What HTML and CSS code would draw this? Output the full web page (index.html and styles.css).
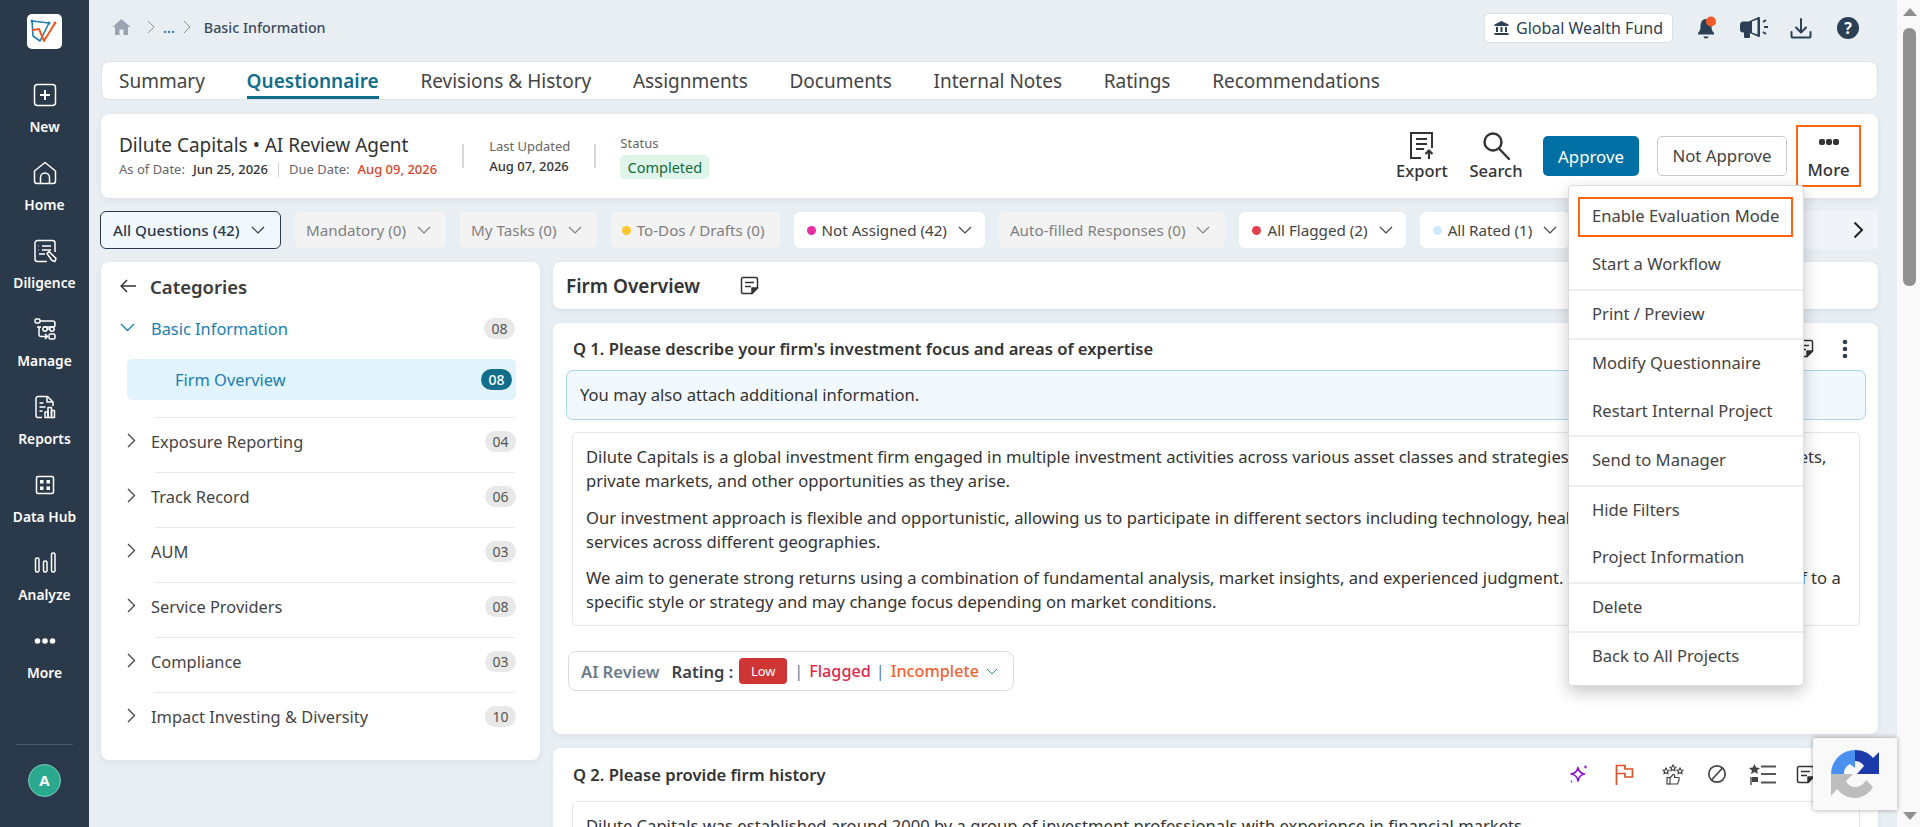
FILE: index.html

```html
<!DOCTYPE html>
<html lang="en">
<head>
<meta charset="utf-8"/>
<meta content="width=device-width, initial-scale=1.0" name="viewport"/>
<title>Basic Information</title>
<link rel="stylesheet" href="styles.css">
</head>
<body>
<div class="app">

  <aside class="sidebar">
    <div class="logo">
      <svg width="35" height="35" viewBox="0 0 35 35" fill="none" stroke-linecap="round" stroke-linejoin="round">
        <path d="M5 7L22 9L13 27L6 22Z" stroke="#1f7fb0" stroke-width="1.6"/>
        <path d="M6 16L12 15L17 27L28 9" stroke="#ef5a24" stroke-width="2"/>
        <circle cx="5" cy="7" r="1.5" fill="#1f7fb0"/>
        <circle cx="22" cy="9" r="1.5" fill="#1f7fb0"/>
        <circle cx="28" cy="9" r="1.5" fill="#ef5a24"/>
      </svg>
    </div>
    <nav class="nav">
      <a class="nav-item">
        <svg width="24" height="24" viewBox="0 0 24 24" fill="none" stroke="#fff" stroke-width="1.5"><rect x="1.5" y="1.5" width="21" height="21" rx="3"/><path d="M12 7v10M7 12h10" stroke-width="2"/></svg>
        <span>New</span>
      </a>
      <a class="nav-item">
        <svg width="24" height="24" viewBox="0 0 24 24" fill="none" stroke="#fff" stroke-width="1.5" stroke-linejoin="round"><path d="M1.5 10L12 1.5L22.5 10V20a2.5 2.5 0 0 1-2.5 2.5H4A2.5 2.5 0 0 1 1.500 20Z"/><path d="M7.500 22V16.500a4.500 4.500 0 0 1 9 0V22"/></svg>
        <span>Home</span>
      </a>
      <a class="nav-item">
        <svg width="24" height="24" viewBox="0 0 24 24" fill="none" stroke="#fff" stroke-width="1.5" stroke-linejoin="round"><path d="M22 13V4a2.500 2.500 0 0 0-2.500-2.500h-15A2.500 2.500 0 0 0 2 4v16a2.500 2.500 0 0 0 2.500 2.500H14"/><path d="M9 7h9M9 11h9M6 15h6M5.500 7h.5M5.500 11h.5"/><path d="M14 14.500l2-2 7 7-1 3-3-1Z"/></svg>
        <span>Diligence</span>
      </a>
      <a class="nav-item">
        <svg width="24" height="24" viewBox="0 0 24 24" fill="none" stroke="#fff" stroke-width="1.5"><rect x="2" y="2" width="5" height="4" rx="1.500"/><path d="M7 4h13a2.500 2.500 0 0 1 2 2.500V8a2 2 0 0 1-2 2h-9"/><circle cx="12" cy="12" r="2.200"/><circle cx="19" cy="12" r="2.200"/><path d="M4 10h4a2 2 0 0 0-2 2v5.500a2 2 0 0 0 2 2h6M12 17l2.500 2.500L12 22M14 12h3"/><rect x="16" y="17" width="6" height="5" rx="1.500"/></svg>
        <span>Manage</span>
      </a>
      <a class="nav-item">
        <svg width="24" height="24" viewBox="0 0 24 24" fill="none" stroke="#fff" stroke-width="1.500" stroke-linejoin="round"><path d="M9 22.500H5a2 2 0 0 1-2-2v-17a2 2 0 0 1 2-2h9.500L20 7v4"/><path d="M14 1.500V7h6M6.500 8h4M6.500 12h6M6.500 16h3"/><rect x="12" y="17" width="3" height="5.500"/><rect x="15" y="12.500" width="3.500" height="10"/><rect x="18.500" y="15.500" width="3" height="7"/></svg>
        <span>Reports</span>
      </a>
      <a class="nav-item">
        <svg width="24" height="24" viewBox="0 0 24 24" fill="none" stroke="#fff" stroke-width="1.500"><rect x="3.500" y="3.500" width="17" height="17" rx="1.500"/><rect x="7" y="7" width="3.500" height="3.500" fill="#fff" stroke="none"/><rect x="13.500" y="7" width="3.500" height="3.500" fill="#fff" stroke="none"/><rect x="7" y="13.500" width="3.500" height="3.500" fill="#fff" stroke="none"/><rect x="13.500" y="13.500" width="3.500" height="3.500" fill="#fff" stroke="none"/></svg>
        <span>Data Hub</span>
      </a>
      <a class="nav-item">
        <svg width="24" height="24" viewBox="0 0 24 24" fill="none" stroke="#fff" stroke-width="1.500"><rect x="2.500" y="7" width="3.500" height="14" rx="1.500"/><rect x="10.500" y="10" width="3.500" height="11" rx="1.500"/><rect x="18.500" y="2" width="3.500" height="19" rx="1.500"/></svg>
        <span>Analyze</span>
      </a>
      <a class="nav-item">
        <svg width="24" height="24" viewBox="0 0 24 24" fill="#fff"><circle cx="4.500" cy="12" r="2.800"/><circle cx="12" cy="12" r="2.800"/><circle cx="19.500" cy="12" r="2.800"/></svg>
        <span>More</span>
      </a>
    </nav>
    <div class="avatar-wrap"><div class="avatar">A</div></div>
  </aside>

  <main class="main">
    <header class="topbar">
      <div class="crumbs">
        <svg class="crumb-home" width="19" height="18" viewBox="0 0 19 18" fill="#9aa5b1"><path d="M9.500 1L0.500 9H3v8h4.500v-5.500h4V17H16V9h2.500Z"/></svg>
        <svg class="crumb-sep" width="8" height="14" viewBox="0 0 8 14" fill="none" stroke="#8a96a3"><path d="M1 1l6 6-6 6"/></svg>
        <span class="crumb-dots">...</span>
        <svg class="crumb-sep" width="8" height="14" viewBox="0 0 8 14" fill="none" stroke="#8a96a3"><path d="M1 1l6 6-6 6"/></svg>
        <span class="crumb-now">Basic Information</span>
      </div>
      <div class="top-right">
        <div class="fund">
          <svg width="15" height="14" viewBox="0 0 15 14" fill="#2b3f55"><path d="M7.500 0L0.500 3.500V5h14V3.500ZM2 6h2v5H2ZM6.500 6h2v5h-2ZM11 6h2v5h-2ZM0.500 12h14v2H0.500Z"/></svg>
          Global Wealth Fund
        </div>
        <svg class="top-bell" width="20" height="24" viewBox="0 0 20 24"><path d="M9 3C4.500 3 3.500 7 3.500 11c0 3-1 4.500-2.500 6v1.500h16V17c-1.500-1.500-2.500-3-2.500-6 0-4-1-8-5.500-8Z" fill="#2b3f55"/><path d="M6.500 20.500h5a2.500 2 0 0 1-5 0Z" fill="#2b3f55"/><circle cx="14" cy="5.500" r="5" fill="#f4592a"/></svg>
        <svg class="top-mega" width="30" height="24" viewBox="0 0 30 24" fill="none" stroke="#2b3f55" stroke-width="2" stroke-linejoin="round"><path d="M1 8.500a2 2 0 0 1 2-2h6L19 2v18L9 15.500H3a2 2 0 0 1-2-2Z" fill="#2b3f55"/><path d="M12 5.500v11l5.500 2V3.500Z" fill="#e9eef3" stroke="none"/><path d="M5 16v5h4v-5" fill="#2b3f55"/><path d="M23 6l3-2M24 11h4M23 16l3 2"/></svg>
        <svg class="top-down" width="22" height="24" viewBox="0 0 22 24" fill="none" stroke="#2b3f55" stroke-width="2" stroke-linecap="round" stroke-linejoin="round"><path d="M11 3v13M6 11.500l5 5 5-5M1.500 16v4.500a1 1 0 0 0 1 1h17a1 1 0 0 0 1-1V16"/></svg>
        <div class="top-help">?</div>
      </div>
    </header>

    <div class="tabs">
      <a class="tab">Summary</a>
      <a class="tab active">Questionnaire</a>
      <a class="tab">Revisions &amp; History</a>
      <a class="tab">Assignments</a>
      <a class="tab">Documents</a>
      <a class="tab">Internal Notes</a>
      <a class="tab">Ratings</a>
      <a class="tab">Recommendations</a>
    </div>

    <section class="head-card">
      <div class="head-title">
        <div class="head-name">Dilute Capitals • AI Review Agent</div>
        <div class="head-dates">
          <span class="muted">As of Date:</span><b>Jun 25, 2026</b><i class="date-sep"></i>
          <span class="muted">Due Date:</span><b class="late">Aug 09, 2026</b>
        </div>
      </div>
      <div class="head-col updated">
        <span class="muted">Last Updated</span>
        <b>Aug 07, 2026</b>
      </div>
      <div class="head-col status">
        <span class="muted">Status</span>
        <span class="badge-done">Completed</span>
      </div>
      <div class="head-actions">
        <a class="act export">
          <svg width="26" height="30" viewBox="0 0 26 30" fill="none" stroke="#333" stroke-width="2"><path d="M12 27H2V2h21v15"/><path d="M7 8h11M7 13h11M7 18h8" /><path d="M20 28v-8M16.500 23l3.500-3.500 3.500 3.500" stroke-width="2.200"/></svg>
          <span>Export</span>
        </a>
        <a class="act search">
          <svg width="28" height="30" viewBox="0 0 28 30" fill="none" stroke="#333" stroke-width="2.400"><circle cx="11" cy="11" r="8.500"/><path d="M17 17.500L27 28" stroke-linecap="round"/></svg>
          <span>Search</span>
        </a>
        <button class="btn-approve">Approve</button>
        <button class="btn-not">Not Approve</button>
        <a class="act more">
          <svg width="22" height="10" viewBox="0 0 22 10" fill="#333"><rect x="1" y="2" width="6" height="6" rx="2"/><rect x="8" y="2" width="6" height="6" rx="2"/><rect x="15" y="2" width="6" height="6" rx="2"/></svg>
          <span>More</span>
        </a>
      </div>
    </section>

    <div class="filters">
      <div class="chip selected">All Questions (42)<svg class="chev" width="14" height="8" viewBox="0 0 14 8"><path d="M1 1l6 6 6-6"/></svg></div>
      <div class="chip off">Mandatory (0)<svg class="chev" width="14" height="8" viewBox="0 0 14 8"><path d="M1 1l6 6 6-6"/></svg></div>
      <div class="chip off">My Tasks (0)<svg class="chev" width="14" height="8" viewBox="0 0 14 8"><path d="M1 1l6 6 6-6"/></svg></div>
      <div class="chip off plain"><i class="dot yellow"></i>To-Dos / Drafts (0)</div>
      <div class="chip on"><i class="dot pink"></i>Not Assigned (42)<svg class="chev" width="14" height="8" viewBox="0 0 14 8"><path d="M1 1l6 6 6-6"/></svg></div>
      <div class="chip off">Auto-filled Responses (0)<svg class="chev" width="14" height="8" viewBox="0 0 14 8"><path d="M1 1l6 6 6-6"/></svg></div>
      <div class="chip on"><i class="dot red"></i>All Flagged (2)<svg class="chev" width="14" height="8" viewBox="0 0 14 8"><path d="M1 1l6 6 6-6"/></svg></div>
      <div class="chip on"><i class="dot sky"></i>All Rated (1)<svg class="chev" width="14" height="8" viewBox="0 0 14 8"><path d="M1 1l6 6 6-6"/></svg></div>
      <div class="filters-rest">
        <svg width="11" height="18" viewBox="0 0 11 18" fill="none" stroke="#222" stroke-width="2"><path d="M1.500 1.500L9 9l-7.500 7.500"/></svg>
      </div>
    </div>

    <div class="columns">
      <aside class="cats">
        <div class="cats-head">
          <svg width="17" height="14" viewBox="0 0 17 14" fill="none" stroke="#333" stroke-width="1.500"><path d="M16 7H1.500M7 1L1.200 7 7 13"/></svg>
          <span>Categories</span>
        </div>
        <div class="cat open">
          <svg class="cat-arrow" width="15" height="9" viewBox="0 0 15 9"><path d="M1 1l6.500 6.500L14 1"/></svg>
          <span class="cat-name">Basic Information</span><span class="count">08</span>
        </div>
        <div class="sub-cat"><span>Firm Overview</span><span class="count dark">08</span></div>
        <div class="cat line">
          <svg class="cat-arrow" width="9" height="15" viewBox="0 0 9 15"><path d="M1 1l6.500 6.500L1 14"/></svg>
          <span class="cat-name">Exposure Reporting</span><span class="count">04</span>
        </div>
        <div class="cat line">
          <svg class="cat-arrow" width="9" height="15" viewBox="0 0 9 15"><path d="M1 1l6.500 6.500L1 14"/></svg>
          <span class="cat-name">Track Record</span><span class="count">06</span>
        </div>
        <div class="cat line">
          <svg class="cat-arrow" width="9" height="15" viewBox="0 0 9 15"><path d="M1 1l6.500 6.500L1 14"/></svg>
          <span class="cat-name">AUM</span><span class="count">03</span>
        </div>
        <div class="cat line">
          <svg class="cat-arrow" width="9" height="15" viewBox="0 0 9 15"><path d="M1 1l6.500 6.500L1 14"/></svg>
          <span class="cat-name">Service Providers</span><span class="count">08</span>
        </div>
        <div class="cat line">
          <svg class="cat-arrow" width="9" height="15" viewBox="0 0 9 15"><path d="M1 1l6.500 6.500L1 14"/></svg>
          <span class="cat-name">Compliance</span><span class="count">03</span>
        </div>
        <div class="cat line">
          <svg class="cat-arrow" width="9" height="15" viewBox="0 0 9 15"><path d="M1 1l6.500 6.500L1 14"/></svg>
          <span class="cat-name">Impact Investing &amp; Diversity</span><span class="count">10</span>
        </div>
      </aside>

      <div class="content">
        <div class="section-head">
          <h2>Firm Overview</h2>
          <svg width="19" height="19" viewBox="0 0 19 19" fill="none" stroke="#333" stroke-width="1.500" stroke-linejoin="round"><path d="M17.500 12V3a1.500 1.500 0 0 0-1.500-1.500H3A1.500 1.500 0 0 0 1.500 3v13A1.500 1.500 0 0 0 3 17.500h9Z"/><path d="M5 6.500h9M5 10.500h6"/><path d="M12 17.500V12h5.500Z" fill="#333"/></svg>
        </div>

        <article class="q-card q-one">
          <div class="q-head">
            <h3>Q 1. Please describe your firm's investment focus and areas of expertise</h3>
            <div class="q-tools">
              <svg class="tool-note" width="19" height="19" viewBox="0 0 19 19" fill="none" stroke="#333" stroke-width="1.500" stroke-linejoin="round"><path d="M17.500 12V3a1.500 1.500 0 0 0-1.500-1.500H3A1.500 1.500 0 0 0 1.500 3v13A1.500 1.500 0 0 0 3 17.500h9Z"/><path d="M5 6.500h9M5 10.500h6"/><path d="M12 17.500V12h5.500Z" fill="#333"/></svg>
              <svg class="tool-dots" width="6" height="20" viewBox="0 0 6 20" fill="#2b3f55"><circle cx="3" cy="3" r="2.300"/><circle cx="3" cy="10" r="2.300"/><circle cx="3" cy="17" r="2.300"/></svg>
            </div>
          </div>
          <div class="q-info">You may also attach additional information.</div>
          <div class="q-answer">
            <p>Dilute Capitals is a global investment firm engaged in multiple investment activities across various asset classes and strategies, including public equity markets, private markets, and other opportunities as they arise.</p>
            <p>Our investment approach is flexible and opportunistic, allowing us to participate in different sectors including technology, healthcare, energy, and financial services across different geographies.</p>
            <p>We aim to generate strong returns using a combination of fundamental analysis, market insights, and experienced judgment. The firm does not restrict itself to a specific style or strategy and may change focus depending on market conditions.</p>
          </div>
          <div class="review">
            <span class="r-agent">AI Review</span>
            <span class="r-rating">Rating :</span>
            <span class="r-low">Low</span>
            <span class="r-sep">|</span>
            <span class="r-flag">Flagged</span>
            <span class="r-sep">|</span>
            <span class="r-inc">Incomplete</span>
            <svg width="12" height="7" viewBox="0 0 12 7" fill="none" stroke="#1f8fb0"><path d="M1 1l5 5 5-5"/></svg>
          </div>
        </article>

        <article class="q-card q-two">
          <div class="q-head">
            <h3>Q 2. Please provide firm history</h3>
            <div class="q-tools wide">
              <svg width="20" height="20" viewBox="0 0 20 20" fill="none" stroke="#8a12d8" stroke-width="1.600" stroke-linejoin="round"><path d="M9 3.500c.8 4 2.500 5.800 6.500 6.500-4 .8-5.700 2.500-6.500 7-.8-4.500-2.500-6.200-7-7 4.500-.7 6.200-2.500 7-6.500Z"/><path d="M16.500 1.500v3M15 3h3M2.500 16.500v2" stroke-width="1.200"/></svg>
              <svg width="19" height="21" viewBox="0 0 19 21" fill="none" stroke="#d9532b" stroke-width="1.700"><path d="M1.500 21V1.500h8.500v3.500h7.500v8h-7.500V9.500H1.500"/></svg>
              <svg width="22" height="21" viewBox="0 0 22 21" fill="none" stroke="#444" stroke-width="1.200"><path d="M4 4l1 2 2 .2-1.500 1.500.4 2-1.900-1-1.900 1 .4-2L1 6.200 3 6ZM11 1l1 2 2 .2-1.500 1.500.4 2-1.900-1-1.900 1 .4-2L8 3.200 10 3ZM18 4l1 2 2 .2-1.500 1.500.4 2-1.900-1-1.900 1 .4-2L15 6.200 17 6Z"/><rect x="5" y="13.500" width="3" height="6.500"/><path d="M8 14l3-3.500c1.500-.5 2 1 1.500 3H17v3l-1.500 3.500H8"/></svg>
              <svg width="20" height="20" viewBox="0 0 20 20" fill="none" stroke="#444" stroke-width="1.700"><circle cx="10" cy="10" r="8.200"/><path d="M4.500 16L15.500 4"/></svg>
              <svg width="27" height="21" viewBox="0 0 27 21" fill="none" stroke="#555" stroke-width="2"><path d="M12 2.500h15M12 10h15M12 18.500h15"/><path d="M5.500 0l1.700 3.500 3.800.4-2.900 2.500.9 3.600-3.500-2-3.500 2 .9-3.600L0 3.900l3.800-.4Z" fill="#444" stroke="none"/><path d="M2 13v8" stroke-width="1.500"/><path d="M3 13h6v5H3Z" fill="#444" stroke="none"/></svg>
              <svg width="19" height="19" viewBox="0 0 19 19" fill="none" stroke="#333" stroke-width="1.500" stroke-linejoin="round"><path d="M17.500 12V3a1.500 1.500 0 0 0-1.500-1.500H3A1.500 1.500 0 0 0 1.500 3v13A1.500 1.500 0 0 0 3 17.500h9Z"/><path d="M5 6.500h9M5 10.500h6"/><path d="M12 17.500V12h5.500Z" fill="#333"/></svg>
            </div>
          </div>
          <div class="q-answer">
            <p>Dilute Capitals was established around 2000 by a group of investment professionals with experience in financial markets.</p>
          </div>
        </article>
      </div>
    </div>
  </main>

  <div class="scrollbar">
    <i class="sb-up"></i>
    <i class="sb-thumb"></i>
    <i class="sb-down"></i>
  </div>

  <div class="menu">
    <a class="menu-item boxed">Enable Evaluation Mode</a>
    <a class="menu-item">Start a Workflow</a>
    <hr>
    <a class="menu-item">Print / Preview</a>
    <hr>
    <a class="menu-item">Modify Questionnaire</a>
    <a class="menu-item">Restart Internal Project</a>
    <hr>
    <a class="menu-item">Send to Manager</a>
    <hr>
    <a class="menu-item">Hide Filters</a>
    <a class="menu-item">Project Information</a>
    <hr>
    <a class="menu-item">Delete</a>
    <hr>
    <a class="menu-item">Back to All Projects</a>
  </div>

  <div class="captcha">
    <svg width="48" height="48" viewBox="0 0 48 48">
      <path d="M24 0A24 24 0 0 0 0 24H13A11 11 0 0 1 19 14L24 18V0Z" fill="#4a90f0"/>
      <path d="M24 0C32 0 38 3 42 8L48 2V24H26L33 16C31 13 28 11 24 11Z" fill="#1c3aa9"/>
      <path d="M0 24H22L15 31C17 35 20 37 24 37C29 37 33 34 35 30L42 37C38 44 31 48 24 48C16 48 10 44 6 39L0 46Z" fill="#bdbdbd"/>
    </svg>
  </div>
</div>
</body>
</html>
```

FILE: styles.css

```css
* {
  box-sizing: border-box;
}
html, body {
  margin: 0;
  height: 827px;
  overflow: hidden;
}
body {
  font-family: "Noto Sans", "Open Sans", Arial, sans-serif;
  background: #e9eef3;
  color: #333;
}
h2, h3, p {
  margin: 0;
}
.app {
  display: flex;
  height: 827px;
  position: relative;
  overflow: hidden;
}

/* sidebar */
.sidebar {
  width: 89px;
  flex-shrink: 0;
  background: #2b3a4a;
  display: flex;
  flex-direction: column;
  align-items: center;
  padding-top: 14px;
}
.logo {
  width: 35px;
  height: 35px;
  background: #fff;
  border-radius: 5px;
}
.nav {
  display: flex;
  flex-direction: column;
  margin-top: 34px;
  flex: 1;
}
.nav-item {
  height: 78px;
  display: flex;
  flex-direction: column;
  align-items: center;
  color: #fff;
  font-size: 13.800px;
  font-weight: 600;
}
.nav-item span {
  margin-top: 11px;
  line-height: 18px;
}
.avatar-wrap {
  width: 57px;
  border-top: 1px solid #46566a;
  display: flex;
  justify-content: center;
  padding: 19px 0 30px;
}
.avatar {
  width: 33px;
  height: 33px;
  border-radius: 50%;
  background: #2ba98f;
  border: 1px solid #7fd0bf;
  color: #fff;
  font-size: 15px;
  font-weight: 700;
  text-align: center;
  line-height: 31px;
}

/* main column */
.main {
  flex: 1;
  min-width: 0;
  padding: 0 19px 0 12px;
}
.topbar {
  height: 61px;
  display: flex;
  justify-content: space-between;
  padding-bottom: 5px;
  align-items: center;
}
.crumbs {
  display: flex;
  align-items: center;
  padding-left: 11px;
  font-size: 14.300px;
  margin-top: -2px;
}
.crumb-sep {
  margin-left: 16px;
}
.crumb-dots {
  color: #1f7fb0;
  margin-left: 8px;
  margin-right: -8px;
  font-weight: 600;
}
.crumb-now {
  color: #3a4a5c;
  font-weight: 500;
  margin-left: 13px;
}
.top-right {
  display: flex;
  align-items: center;
  padding-right: 19px;
}
.fund {
  width: 189px;
  height: 30px;
  background: #fff;
  border: 1px solid #dde2e8;
  border-radius: 5px;
  display: flex;
  align-items: center;
  justify-content: center;
  gap: 7px;
  color: #2b3f55;
  font-size: 16px;
}
.top-bell {
  margin-left: 24px;
}
.top-mega {
  margin-left: 22.500px;
}
.top-down {
  margin-left: 20.500px;
}
.top-help {
  width: 22px;
  height: 22px;
  margin-left: 25px;
  border-radius: 50%;
  background: #2b3f55;
  color: #fff;
  font-size: 16px;
  font-weight: 700;
  text-align: center;
  line-height: 22px;
}

/* tabs */
.tabs {
  height: 39px;
  background: #fff;
  border: 1px solid #dfe3e8;
  border-radius: 8px;
  display: flex;
  gap: 41.700px;
  padding-left: 17px;
}
.tab {
  font-size: 19px;
  line-height: 38px;
  height: 37px;
  color: #444;
}
.tab.active {
  color: #116e8a;
  font-weight: 600;
  border-bottom: 3px solid #116e8a;
}

/* header card */
.head-card {
  height: 84px;
  margin-top: 14px;
  background: #fff;
  border-radius: 8px;
  box-shadow: 0 2px 6px rgba(40, 60, 80, 0.08);
  display: flex;
  align-items: center;
  padding-left: 18px;
  position: relative;
}
.head-title {
  margin-top: -2px;
}
.head-name {
  font-size: 19px;
  line-height: 24px;
  color: #333;
}
.head-dates {
  font-size: 13px;
  line-height: 18px;
  display: flex;
  align-items: center;
  margin-top: 3px;
}
.head-dates .muted {
  margin-right: 8px;
}
.head-dates b {
  font-weight: 500;
  color: #333;
}
.head-dates b.late {
  color: #d9432a;
}
.date-sep {
  width: 1px;
  height: 15px;
  background: #d9d0cc;
  margin: 2px 10px 0;
}
.muted {
  color: #666;
  font-weight: 400;
}
.head-col {
  display: flex;
  flex-direction: column;
  font-size: 13px;
  border-left: 2px solid #d5d9dd;
  height: 24px;
  justify-content: center;
}
.head-col b {
  font-weight: 500;
}
.updated {
  margin-left: 25px;
  padding-left: 25px;
  gap: 2px;
}
.status {
  margin-left: 24px;
  padding-left: 24px;
}
.status .muted {
  margin-top: -21px;
}
.badge-done {
  width: 89px;
  height: 24px;
  margin-top: 3px;
  border-radius: 5px;
  background: #e0f5ea;
  color: #0f6b3a;
  font-size: 14.500px;
  text-align: center;
  line-height: 24px;
  margin-bottom: -22px;
}
.head-actions {
  margin-left: auto;
  display: flex;
  align-items: center;
  height: 100%;
  padding-right: 17px;
}
.act {
  display: flex;
  flex-direction: column;
  align-items: center;
  font-size: 16.500px;
  font-weight: 500;
  color: #333;
}
.act span {
  line-height: 20px;
}
.export {
  width: 60px;
}
.search {
  width: 60px;
  margin-left: 14px;
}
button {
  font-family: inherit;
  font-size: 16.800px;
  height: 40px;
  padding: 0 0 2px;
  border-radius: 5px;
}
.btn-approve {
  width: 96px;
  margin-left: 17px;
  background: #0070a4;
  color: #fff;
  border: none;
  padding: 0;
}
.btn-not {
  width: 130px;
  margin-left: 18px;
  background: #fff;
  color: #444;
  border: 1px solid #c9c9c9;
}
.more {
  width: 65px;
  height: 62px;
  margin-left: 9px;
  border: 2px solid #ff6510;
  padding-top: 10px;
  font-size: 16.800px;
}
.more span {
  margin-top: 13px;
}

/* filter chips */
.filters {
  height: 38px;
  margin-top: 13px;
  margin-left: -1px;
  display: flex;
  align-items: center;
  gap: 14px;
}
.chip {
  height: 36px;
  border-radius: 6px;
  display: flex;
  align-items: center;
  padding: 0 13px;
  font-size: 15.200px;
  white-space: nowrap;
  flex-shrink: 0;
}
.chev {
  margin-left: 11px;
  fill: none;
  stroke: currentColor;
  stroke-width: 1.200;
}
.chip.selected {
  width: 181px;
  height: 38px;
  padding: 0 12px;
  border: 1px solid #2b3a4a;
  background: #f1f8fe;
  color: #2b3a4a;
  font-weight: 500;
}
.chip.off {
  padding: 0 15px 0 11px;
  background: #f3f3f3;
  color: #808080;
}
.chip.on {
  background: #fff;
  color: #444;
}
.dot {
  width: 9px;
  height: 9px;
  border-radius: 50%;
  margin-right: 6px;
}
.yellow { background: #fcc62d; }
.pink { background: #e52ea0; }
.red { background: #e2404f; }
.sky { background: #cde9fb; }
.filters-rest {
  flex: 1;
  height: 38px;
  margin-left: -14px;
  background: #f0f4f9;
  display: flex;
  align-items: center;
  justify-content: flex-end;
  padding-right: 14px;
}

/* two columns */
.columns {
  display: flex;
  gap: 13px;
  margin-top: 13px;
  align-items: flex-start;
}
.cats {
  width: 439px;
  height: 498px;
  flex-shrink: 0;
  background: #fff;
  border-radius: 8px;
  box-shadow: 0 2px 6px rgba(40, 60, 80, 0.08);
  padding: 0 25px 0 19px;
}
.cats-head {
  height: 50px;
  padding-bottom: 2px;
  display: flex;
  align-items: center;
  gap: 13px;
  font-size: 18.500px;
  font-weight: 600;
  color: #3a3a3a;
}
.cat {
  height: 55px;
  display: flex;
  align-items: center;
  font-size: 16.400px;
  color: #444;
  position: relative;
}
.cat-arrow {
  fill: none;
  stroke: #444;
  stroke-width: 1.300;
  position: absolute;
  left: 4px;
  top: 17px;
}
.cat-name {
  margin-left: 31px;
  flex: 1;
}
.cat.open {
  height: 34px;
  padding-bottom: 2px;
  color: #1a7fb0;
}
.cat.open .cat-arrow {
  stroke: #1a7fb0;
  left: 0;
  top: 11px;
}
.cat.line {
  margin-left: 35px;
  border-top: 1px solid #e9e9e9;
  padding-bottom: 8px;
}
.cat.line .cat-arrow {
  left: -28px;
  top: 15px;
}
.cat.line .cat-name {
  margin-left: -4px;
}
.cat.line .count {
  margin-right: -1px;
}
.count {
  width: 31px;
  height: 21px;
  border-radius: 11px;
  background: #e8e8e8;
  color: #555;
  font-size: 14px;
  text-align: center;
  line-height: 21px;
}
.sub-cat {
  width: 389px;
  height: 41px;
  margin: 13px 0 17px 7px;
  background: #e1f3fc;
  border-radius: 5px;
  display: flex;
  align-items: center;
  justify-content: space-between;
  padding: 0 4px 0 48px;
  font-size: 16.400px;
  color: #1a7fb0;
}
.count.dark {
  background: #116e8a;
  color: #fff;
  font-weight: 500;
}

/* right column */
.content {
  flex: 1;
  min-width: 0;
}
.section-head {
  height: 47px;
  background: #fff;
  border-radius: 8px;
  box-shadow: 0 2px 6px rgba(40, 60, 80, 0.08);
  display: flex;
  align-items: center;
  gap: 40px;
  padding-left: 13px;
}
.section-head h2 {
  font-size: 19px;
  font-weight: 600;
  color: #333;
}
.q-card {
  background: #fff;
  border-radius: 8px;
  box-shadow: 0 2px 6px rgba(40, 60, 80, 0.08);
  margin-top: 14px;
  padding: 0 18px 0 13px;
}
.q-one {
  height: 411px;
}
.q-two {
  height: 200px;
}
.q-head {
  height: 47px;
  display: flex;
  align-items: center;
  justify-content: space-between;
  padding-left: 7px;
  padding-top: 4px;
}
.q-head h3 {
  font-size: 16.600px;
  font-weight: 600;
  color: #333;
}
.q-two .q-head {
  padding-top: 5px;
}
.q-tools {
  display: flex;
  align-items: center;
  gap: 28px;
  padding-right: 12px;
}
.q-tools.wide {
  gap: 0;
  padding-right: 45px;
}
.q-tools.wide svg:nth-child(2) { margin-left: 26.500px; }
.q-tools.wide svg:nth-child(3) { margin-left: 27.500px; }
.q-tools.wide svg:nth-child(4) { margin-left: 23px; }
.q-tools.wide svg:nth-child(5) { margin-left: 22.500px; }
.q-tools.wide svg:nth-child(6) { margin-left: 20px; }
.q-info {
  height: 50px;
  margin-right: -6px;
  background: #f1f8fe;
  border: 1px solid #a9d6e5;
  border-radius: 7px;
  padding-left: 13px;
  font-size: 16.600px;
  line-height: 48px;
}
.q-answer {
  margin: 12px 0 0 6px;
  border: 1px solid #e6e6e6;
  border-radius: 5px;
  padding: 12px 12px 0 13px;
  height: 194px;
  font-size: 16.600px;
  line-height: 24px;
}
.q-two .q-answer {
  margin-top: 6px;
}
.q-answer p {
  margin-bottom: 12.500px;
}
.review {
  width: 446px;
  height: 40px;
  margin: 25px 0 0 2px;
  border: 1px solid #dcdce2;
  border-radius: 8px;
  display: flex;
  align-items: center;
  padding-left: 12px;
  font-size: 16.200px;
  font-weight: 500;
  white-space: nowrap;
}
.r-agent { color: #6b7a8d; font-size: 16.600px; font-weight: 600; }
.r-rating { margin-left: 12px; color: #3a4048; font-size: 16.600px; font-weight: 600; }
.r-low {
  width: 48px;
  height: 26px;
  margin-left: 6px;
  border-radius: 4px;
  background: #cf3535;
  color: #fff;
  font-size: 13px;
  font-weight: 400;
  text-align: center;
  line-height: 26px;
}
.r-sep { margin: 0 6px 0 7px; color: #5a7fa0; font-weight: 400; }
.r-flag { color: #e0284f; }
.r-inc { color: #f2622f; margin-right: 7px; }
.r-flag + .r-sep { margin: 0 6px 0 5px; }

/* fake scrollbar */
.scrollbar {
  width: 23px;
  flex-shrink: 0;
  background: #f9f9f9;
  display: flex;
  flex-direction: column;
  align-items: center;
  padding-left: 2px;
  position: relative;
}
.sb-up {
  margin-top: 8px;
  border-left: 7px solid transparent;
  border-right: 7px solid transparent;
  border-bottom: 8px solid #909090;
}
.sb-thumb {
  width: 13px;
  height: 258px;
  margin-top: 12px;
  border-radius: 6px;
  background: #909090;
}
.sb-down {
  margin-top: auto;
  margin-bottom: 7px;
  border-left: 7px solid transparent;
  border-right: 7px solid transparent;
  border-top: 8px solid #909090;
}

/* More menu */
.menu {
  position: absolute;
  left: 1568px;
  top: 185px;
  width: 236px;
  height: 501px;
  padding-top: 7px;
  background: #fff;
  border: 1px solid #dcdcdc;
  border-radius: 4px;
  box-shadow: 0 6px 16px rgba(0, 0, 0, 0.22);
}
.menu hr {
  margin: 0;
  height: 2px;
  border: none;
  background: #eeeeee;
}
.menu-item {
  display: block;
  height: 47.500px;
  line-height: 45px;
  padding-left: 23px;
  font-size: 16.600px;
  color: #444;
}
.menu-item.boxed {
  width: 215px;
  height: 40px;
  line-height: 34px;
  margin: 4px 0 4px 9px;
  padding-left: 12px;
  border: 2px solid #ff6510;
}

/* recaptcha badge */
.captcha {
  position: absolute;
  left: 1813px;
  top: 738px;
  width: 84px;
  height: 72px;
  background: #f9f9f9;
  border-radius: 2px 0 0 2px;
  box-shadow: 0 0 5px rgba(0, 0, 0, 0.35);
  padding: 12px 0 0 18px;
}
```
